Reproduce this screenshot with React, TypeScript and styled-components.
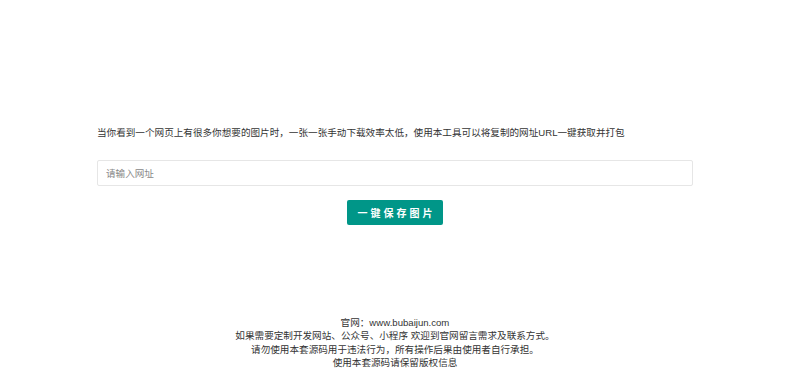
import React from "react";
import styled, { createGlobalStyle } from "styled-components";

const Global = createGlobalStyle`
  html, body { margin: 0; padding: 0; background: #fff; }
  body { font-family: "Liberation Sans", "Noto Sans CJK SC", sans-serif; color: #333; }
`;

const Page = styled.div`
  width: 790px;
  display: flex;
  flex-direction: column;
  align-items: center;
`;

const Main = styled.div`
  width: 596px;
  margin-top: 126px;
  display: flex;
  flex-direction: column;
  align-items: center;
`;

const Intro = styled.p`
  align-self: stretch;
  margin: 0;
  font-size: 9.6px;
  line-height: 14px;
  color: #333;
`;

const UrlInput = styled.input`
  box-sizing: border-box;
  align-self: stretch;
  margin-top: 20px;
  height: 26px;
  border: 1px solid #e6e6e6;
  border-radius: 2px;
  padding: 0 8px;
  font-family: inherit;
  font-size: 9.6px;
  color: #333;
  outline: none;
  &::placeholder { color: #888; }
`;

const SaveButton = styled.button`
  margin-top: 14px;
  width: 96px;
  height: 25px;
  border: none;
  border-radius: 2px;
  background: #009688;
  color: #fff;
  font-family: inherit;
  font-size: 10px;
  font-weight: bold;
  letter-spacing: 3px;
  padding: 0 0 0 3px;
  cursor: pointer;
`;

const Footer = styled.footer`
  margin-top: 91px;
  display: flex;
  flex-direction: column;
  align-items: center;
  font-size: 9.6px;
  line-height: 13.4px;
  color: #333;
`;

const Line = styled.div``;

export default function App() {
  return (
    <Page>
      <Global />
      <Main>
        <Intro>当你看到一个网页上有很多你想要的图片时，一张一张手动下载效率太低，使用本工具可以将复制的网址URL一键获取并打包</Intro>
        <UrlInput placeholder="请输入网址" />
        <SaveButton>一键保存图片</SaveButton>
      </Main>
      <Footer>
        <Line>官网：www.bubaijun.com</Line>
        <Line>如果需要定制开发网站、公众号、小程序 欢迎到官网留言需求及联系方式。</Line>
        <Line>请勿使用本套源码用于违法行为，所有操作后果由使用者自行承担。</Line>
        <Line>使用本套源码请保留版权信息</Line>
      </Footer>
    </Page>
  );
}
